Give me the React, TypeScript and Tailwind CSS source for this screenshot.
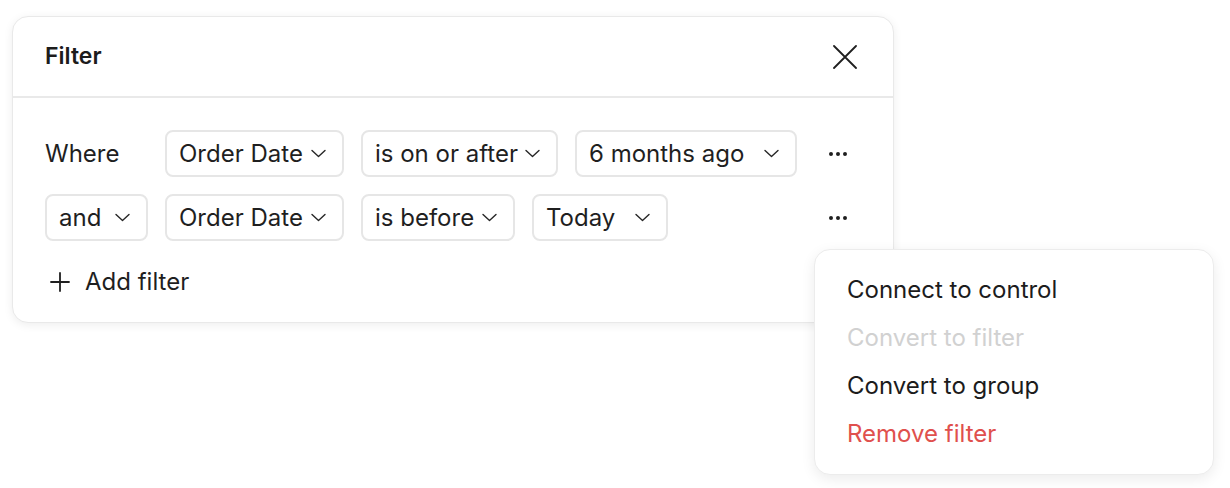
import { Ellipsis } from "lucide-react";

function Chevron() {
  return (
    <svg width="15" height="9" viewBox="0 0 15 9" fill="none" className="shrink-0">
      <path d="M1 1.5L7.5 7.5L14 1.5" stroke="#262626" strokeWidth="1.4" strokeLinecap="round" strokeLinejoin="round" />
    </svg>
  );
}

function Select({ label, width }: { label: string; width: string }) {
  return (
    <button
      className={`flex h-[47px] items-center justify-between rounded-lg border-2 border-[#e6e6e6] bg-white pl-[12px] pr-[16px] text-[24px] text-[#1f1f1f] ${width}`}
    >
      <span>{label}</span>
      <Chevron />
    </button>
  );
}

function MoreButton() {
  return (
    <button className="ml-auto mr-[11px] flex h-[24px] w-[24px] items-center justify-center text-[#1f1f1f]">
      <Ellipsis size={24} strokeWidth={2} />
    </button>
  );
}

const menuItems = [
  { label: "Connect to control", color: "text-[#1c1c1c]" },
  { label: "Convert to filter", color: "text-[#d1d1d1]" },
  { label: "Convert to group", color: "text-[#1c1c1c]" },
  { label: "Remove filter", color: "text-[#e0504d]" },
];

export default function App() {
  return (
    <div
      className="relative h-[488px] w-[1230px] overflow-hidden bg-white pl-[12px] pt-[16px]"
      style={{ fontFamily: "Inter, 'Noto Sans', sans-serif" }}
    >
      <div className="w-[882px] rounded-2xl border border-[#e9e9e9] bg-white shadow-[0_2px_10px_rgba(0,0,0,0.07)]">
        <div className="flex h-[81px] items-center justify-between border-b-2 border-[#e9e9e9] pl-[32px] pr-[36px]">
          <h2 className="text-[23px] font-semibold text-[#1c1c1c]">Filter</h2>
          <svg width="24" height="24" viewBox="0 0 24 24" fill="none">
            <path d="M1 1L23 23M23 1L1 23" stroke="#1f1f1f" strokeWidth="1.8" strokeLinecap="round" />
          </svg>
        </div>
        <div className="flex flex-col gap-[17px] px-[32px] pb-[22px] pt-[32px]">
          <div className="flex items-center gap-[17px]">
            <div className="w-[103px] text-[24px] text-[#1f1f1f]">Where</div>
            <Select label="Order Date" width="w-[179px]" />
            <Select label="is on or after" width="w-[197px]" />
            <Select label="6 months ago" width="w-[222px]" />
            <MoreButton />
          </div>
          <div className="flex items-center gap-[17px]">
            <Select label="and" width="w-[103px]" />
            <Select label="Order Date" width="w-[179px]" />
            <Select label="is before" width="w-[154px]" />
            <Select label="Today" width="w-[136px]" />
            <MoreButton />
          </div>
          <button className="mt-[6px] flex items-center gap-[15px] pl-[5px] text-[24px] text-[#1f1f1f]">
            <svg width="20" height="20" viewBox="0 0 20 20" fill="none">
              <path d="M10 1V19M1 10H19" stroke="#1f1f1f" strokeWidth="1.8" strokeLinecap="round" />
            </svg>
            <span>Add filter</span>
          </button>
        </div>
      </div>

      <div className="absolute left-[814px] top-[249px] w-[400px] rounded-2xl border border-[#ececec] bg-white pb-[16px] pt-[16px] shadow-[0_4px_14px_rgba(0,0,0,0.08)]">
        {menuItems.map((item) => (
          <div key={item.label} className={`flex h-[48px] items-center pl-[32px] text-[24px] ${item.color}`}>
            {item.label}
          </div>
        ))}
      </div>
    </div>
  );
}
